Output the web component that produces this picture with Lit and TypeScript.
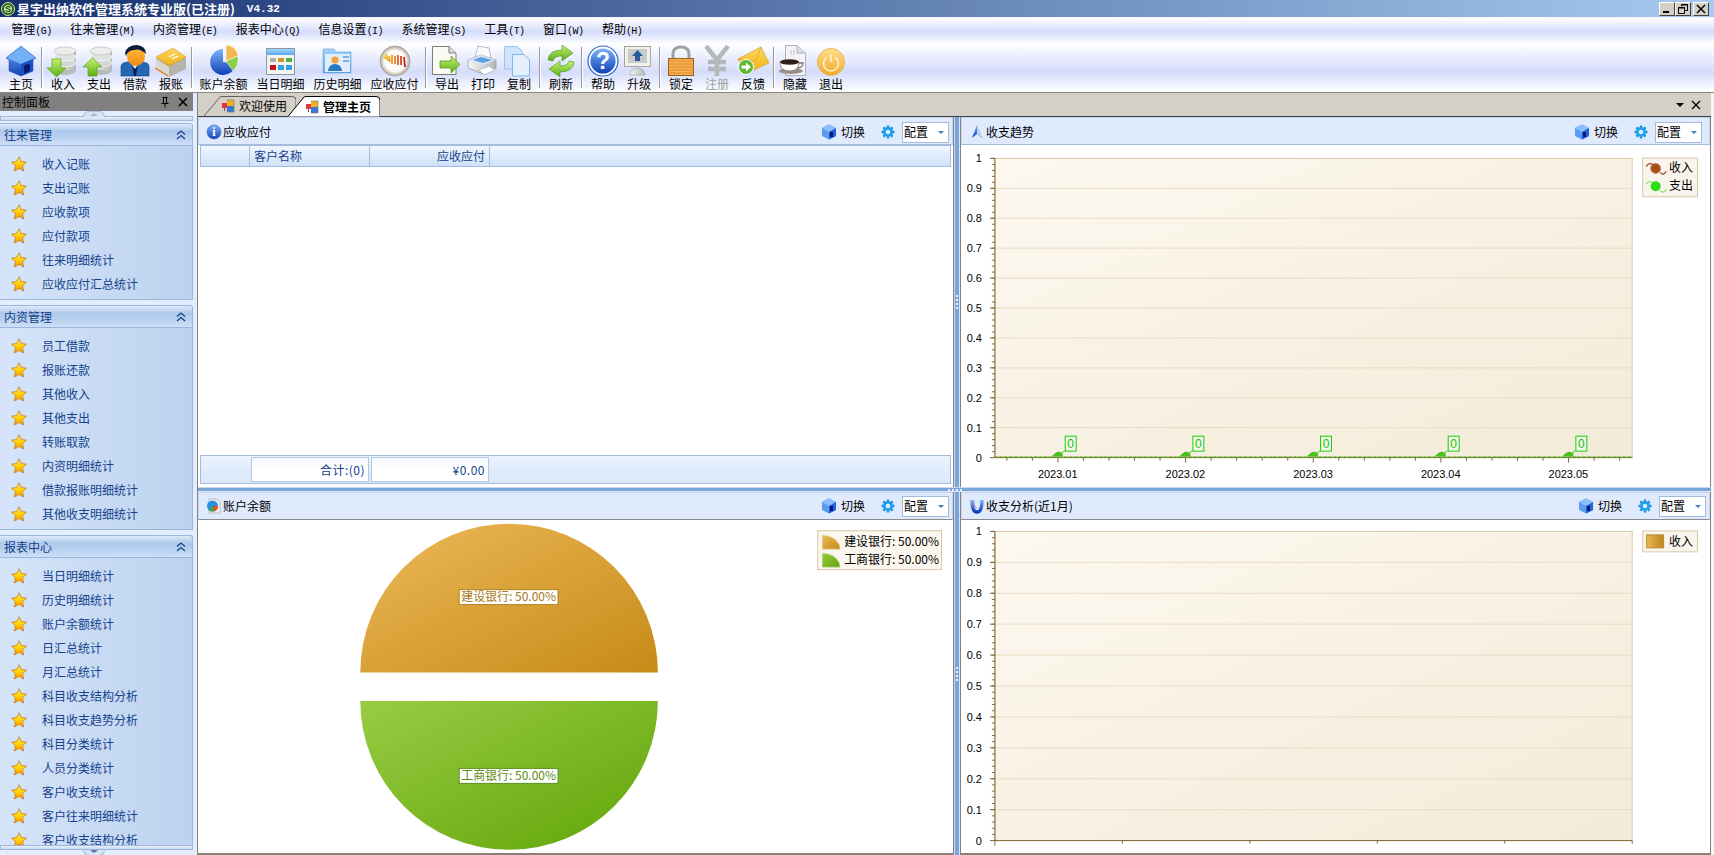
import { LitElement, html, svg, css } from "lit";
import { customElement } from "lit/decorators.js";

/* toolbar icons, drawn on a 32x32 box */

const cylinder = svg`
  <ellipse cx="18" cy="25" rx="11" ry="5" fill="#b8bcb8"/>
  <rect x="7" y="6" width="22" height="19" fill="url(#grey)"/>
  <ellipse cx="18" cy="18" rx="11" ry="4" fill="#d4d8d4" stroke="#fff" stroke-width=".6"/>
  <ellipse cx="18" cy="12" rx="11" ry="4" fill="#dfe2df" stroke="#fff" stroke-width=".6"/>
  <ellipse cx="18" cy="6" rx="11" ry="4" fill="#eceeec" stroke="#b0b4b0" stroke-width=".6"/>
`;

const icons: Record<string, unknown> = {
  home: svg`
    <path d="M16 1 L31 13 L28 15 V26 L16 31 L4 26 V15 L1 13 Z" fill="url(#blue)" stroke="#1c50b0" stroke-width=".5"/>
    <path d="M16 2 L30 13 L16 19 L2 13 Z" fill="#74b0f6"/>
    <path d="M16 19 L28 14 V26 L16 31 Z" fill="#1850c8"/>
    <path d="M19 29 V21 Q22 18 25 19.500 V26 Z" fill="#08186c"/>`,
  in: svg`${cylinder}
    <path d="M5 14 H14 V23 H19 L9.500 32 L0 23 H5 Z" fill="url(#green)" stroke="#58a010" stroke-width=".7"/>`,
  out: svg`${cylinder}
    <path d="M5 31 H14 V22 H19 L9.500 13 L0 22 H5 Z" fill="url(#green)" stroke="#58a010" stroke-width=".7"/>`,
  person: svg`
    <path d="M2 31 V21 Q2 18 8 17 H24 Q30 18 30 21 V31 Z" fill="#2468b4" stroke="#103c78" stroke-width=".6"/>
    <path d="M13 19 H19 L17 31 H15 Z" fill="#081c50"/>
    <path d="M11 17 L16 24 L21 17 Z" fill="#e8f0f8"/>
    <ellipse cx="17" cy="11" rx="9" ry="10" fill="url(#skin)"/>
    <path d="M6 8 Q8 0 18 0 Q27 1 27 9 Q21 3 15 5 Q9 5 7 11 Z" fill="#0c1c3c"/>`,
  book: svg`
    <path d="M1 14 L18 5 L31 13 V24 L14 32 L1 24 Z" fill="#b4b4ac"/>
    <path d="M1 14 L14 22 V32 L1 24 Z" fill="#d8d8d0"/>
    <path d="M1 12 L18 3 L31 12 L14 21 Z" fill="url(#gold)" stroke="#d09010" stroke-width=".5"/>
    <path d="M14 12 L20 9 M17 14 L23 11" stroke="#fff" stroke-width="1.300"/>
    <path d="M0 23 L13 31" stroke="#e87818" stroke-width="1.400"/>`,
  pie: svg`
    <path d="M15 4 A13 13 0 1 0 28 19 L15 17 Z" fill="url(#blue)"/>
    <path d="M18 16 V0 Q29 1 30 11 Z" fill="#f4b850" stroke="#fff" stroke-width=".5"/>
    <path d="M18 16 L30 11 Q31 21 25 26 Z" fill="#8cd048" stroke="#fff" stroke-width=".5"/>`,
  calendar: svg`
    <rect x="1.500" y="3.500" width="28" height="26" fill="#f4f4f0" stroke="#8c98a4"/>
    <rect x="2" y="4" width="27" height="6" fill="url(#sky)"/>
    <rect x="5" y="13" width="6" height="4" fill="#b0b0a8"/><rect x="13" y="13" width="6" height="4" fill="#d89028"/><rect x="21" y="13" width="6" height="4" fill="#50b048"/>
    <rect x="5" y="20" width="6" height="5" fill="#c01818"/><rect x="13" y="20" width="6" height="5" fill="#38a0e8"/><rect x="21" y="20" width="6" height="5" fill="#38a0e8"/>`,
  folder: svg`
    <path d="M1 4 H12 L14 7 H29 V28 H1 Z" fill="url(#sky)" stroke="#68a0d8" stroke-width=".6"/>
    <rect x="3" y="9" width="25" height="18" fill="#e0eefc"/>
    <circle cx="13" cy="15" r="3.600" fill="#f4a040"/>
    <path d="M6 26 Q7 19 13 19 Q19 19 20 26 Z" fill="#2878c8"/>
    <path d="M21 12 H27 M21 16 H27" stroke="#58a0e0" stroke-width="1.500"/>`,
  gauge: svg`
    <circle cx="16" cy="16" r="15" fill="url(#disc)" stroke="#a09890" stroke-width=".7"/>
    <path d="M4 10 L7 14 M7 9 L9 16 M10 11 L11 17 M13 10 L13 19 M16 11 L16 19 M19 10 L19 20 M22 11 L22 20 M25 12 L26 22" stroke="url(#bars)" stroke-width="1.700"/>`,
  export: svg`
    <path d="M1.500 1.500 H18 L25 8 V29.500 H1.500 Z" fill="#fbfbf6" stroke="#7c7c78"/>
    <path d="M18 1.500 V8 H25" fill="#dcdcd4" stroke="#7c7c78"/>
    <path d="M9 16 H20 V11 L29 19.500 L20 28 V23 H9 Z" fill="url(#green)" stroke="#489010" stroke-width=".7"/>`,
  print: svg`
    <path d="M8 13 L11 1 L22 3 L24 13 Z" fill="#fbfbfb" stroke="#9ca0a8" stroke-width=".7"/>
    <path d="M1 15 L14 10 L29 15 V23 L16 29 L1 23 Z" fill="url(#grey)" stroke="#8a90a0" stroke-width=".7"/>
    <path d="M1 15 L14 10 L29 15 L16 20 Z" fill="#d8e4f4"/>
    <path d="M6 15 L14 12 L25 15 L16 18 Z" fill="#5aa0e0"/>
    <path d="M12 25 L22 21 L28 25 L17 30 Z" fill="#fff" stroke="#9ca0a8" stroke-width=".6"/>`,
  copy: svg`
    <path d="M1.500 1.500 H14 L19 6 V24 H1.500 Z" fill="#cfe4fc" stroke="#98c4f0"/>
    <path d="M9.500 9.500 H21 L26.500 15 V31 H9.500 Z" fill="#e4f0fe" stroke="#80b4ec"/>`,
  refresh: svg`
    <path d="M3 15 Q4 5 17 5 V0 L28 8 L17 16 V11 Q9 11 8 16 Z" fill="url(#green)" stroke="#308010" stroke-width=".5"/>
    <path d="M29 17 Q28 27 15 27 V32 L4 24 L15 16 V21 Q23 21 24 16 Z" fill="url(#green)" stroke="#308010" stroke-width=".5"/>`,
  help: svg`
    <circle cx="16" cy="16" r="15" fill="#fff" stroke="#2a68c8" stroke-width="1.200"/>
    <circle cx="16" cy="16" r="12.600" fill="url(#blue)"/>
    <text x="16" y="24" text-anchor="middle" class="glyph">?</text>`,
  upgrade: svg`
    <rect x="1.500" y="1.500" width="26" height="20" fill="#f0f0ec" stroke="#a8a8a0"/>
    <rect x="5" y="4" width="19" height="14" fill="#c8ccc8"/>
    <path d="M14.500 5 L20 11 H17 V16 H12 V11 H9 Z" fill="#2a5a98"/>
    <path d="M7 30 Q8 23 14.500 23 Q21 23 22 30 Z" fill="url(#grey)" stroke="#909090" stroke-width=".5"/>`,
  lock: svg`
    <path d="M8 14 V9 Q8 2 16 2 Q24 2 24 9 V14" fill="none" stroke="#a0a0a0" stroke-width="3"/>
    <rect x="3.500" y="13.500" width="25" height="17" fill="#f4b058" stroke="#9c6018"/>
    <path d="M4 16 H28 M4 19 H28 M4 22 H28 M4 25 H28 M4 28 H28" stroke="#e88a20" stroke-width="1.200"/>`,
  yen: svg`
    <path d="M5 1 L16 15 L27 1 M16 15 V31 M7 17 H25 M7 24 H25" fill="none" stroke="#b4b8b8" stroke-width="4.500"/>`,
  mail: svg`
    <path d="M1 14 L24 2 L32 18 L10 28 Z" fill="url(#gold)" stroke="#c89820" stroke-width=".6"/>
    <path d="M1 14 L19 16 L24 2" fill="none" stroke="#d8a828" stroke-width=".8"/>
    <circle cx="9" cy="22" r="7.500" fill="#60b830" stroke="#fff"/>
    <path d="M4.500 20.500 H9 V17.500 L14 22 L9 26.500 V23.500 H4.500 Z" fill="#fff"/>`,
  coffee: svg`
    <path d="M6.500 .500 H18 L26.500 8 V30.500 H6.500 Z" fill="#f4f4f8" stroke="#b0b0b8"/>
    <path d="M18 .500 V8 H26.500" fill="#dcdce4" stroke="#b0b0b8"/>
    <path d="M12 5 V10 M15 5 V10" stroke="#c0c0c8"/>
    <ellipse cx="12" cy="26" rx="12" ry="3" fill="#989088"/>
    <path d="M1 17 H20 Q20 26 11 26 Q1 26 1 17 Z" fill="#fff" stroke="#707070" stroke-width=".7"/>
    <ellipse cx="10.500" cy="17" rx="9.500" ry="2.800" fill="#302018"/>
    <path d="M20 18 H24 Q24 23 18 23" fill="none" stroke="#807870" stroke-width="1.300"/>`,
  exit: svg`
    <circle cx="16" cy="17" r="13.500" fill="url(#orange)" stroke="#e8b850"/>
    <path d="M11.500 12.500 A7.500 7.500 0 1 0 20.500 12.500 M16 9.500 V17" fill="none" stroke="#fff3d0" stroke-width="1.600"/>`,
};

const defs = svg`<defs>
  <linearGradient id="blue" x1="0" y1="0" x2="0" y2="1"><stop offset="0" stop-color="#7cb4f8"/><stop offset="1" stop-color="#1040b8"/></linearGradient>
  <linearGradient id="green" x1="0" y1="0" x2="0" y2="1"><stop offset="0" stop-color="#c8f070"/><stop offset="1" stop-color="#58b018"/></linearGradient>
  <linearGradient id="grey" x1="0" y1="0" x2="1" y2="0"><stop offset="0" stop-color="#f4f6f4"/><stop offset="1" stop-color="#b4b8b4"/></linearGradient>
  <linearGradient id="skin" x1="0" y1="0" x2="0" y2="1"><stop offset="0" stop-color="#ffc040"/><stop offset="1" stop-color="#f08810"/></linearGradient>
  <linearGradient id="gold" x1="0" y1="0" x2="0" y2="1"><stop offset="0" stop-color="#ffd860"/><stop offset="1" stop-color="#f0b018"/></linearGradient>
  <linearGradient id="sky" x1="0" y1="0" x2="0" y2="1"><stop offset="0" stop-color="#a0d4fc"/><stop offset="1" stop-color="#58a8f0"/></linearGradient>
  <linearGradient id="orange" x1="0" y1="0" x2="0" y2="1"><stop offset="0" stop-color="#fde090"/><stop offset="1" stop-color="#f4a828"/></linearGradient>
  <radialGradient id="disc"><stop offset=".7" stop-color="#fbfbf8"/><stop offset="1" stop-color="#b0a89c"/></radialGradient>
  <linearGradient id="bars" x1="0" y1="0" x2="1" y2="0"><stop offset="0" stop-color="#f0d020"/><stop offset=".5" stop-color="#f08020"/><stop offset="1" stop-color="#c01818"/></linearGradient>
  <linearGradient id="star" x1="0" y1="0" x2="0" y2="1"><stop offset="0" stop-color="#fff650"/><stop offset=".55" stop-color="#ffd000"/><stop offset="1" stop-color="#fc9000"/></linearGradient>
  <linearGradient id="plot" x1="0" y1="0" x2="1" y2="1"><stop offset="0" stop-color="#fdf8f0"/><stop offset="1" stop-color="#f3ebd8"/></linearGradient>
  <linearGradient id="pieTop" x1="0" y1="0" x2="1" y2="1"><stop offset="0" stop-color="#ecba58"/><stop offset="1" stop-color="#c68a18"/></linearGradient>
  <linearGradient id="pieBot" x1="0" y1="0" x2="1" y2="1"><stop offset="0" stop-color="#98cc44"/><stop offset="1" stop-color="#60a408"/></linearGradient>
  <linearGradient id="swatch" x1="0" y1="0" x2="1" y2="0"><stop offset="0" stop-color="#eab850"/><stop offset="1" stop-color="#bc8420"/></linearGradient>
</defs>`;

type Tool = { label: string; icon: string; wide?: boolean; off?: boolean };

const toolGroups: Tool[][] = [
  [{ label: "主页", icon: "home" }],
  [
    { label: "收入", icon: "in" },
    { label: "支出", icon: "out" },
    { label: "借款", icon: "person" },
    { label: "报账", icon: "book" },
  ],
  [
    { label: "账户余额", icon: "pie", wide: true },
    { label: "当日明细", icon: "calendar", wide: true },
    { label: "历史明细", icon: "folder", wide: true },
    { label: "应收应付", icon: "gauge", wide: true },
  ],
  [
    { label: "导出", icon: "export" },
    { label: "打印", icon: "print" },
    { label: "复制", icon: "copy" },
  ],
  [{ label: "刷新", icon: "refresh" }],
  [
    { label: "帮助", icon: "help" },
    { label: "升级", icon: "upgrade" },
  ],
  [
    { label: "锁定", icon: "lock" },
    { label: "注册", icon: "yen", off: true },
    { label: "反馈", icon: "mail" },
  ],
  [
    { label: "隐藏", icon: "coffee" },
    { label: "退出", icon: "exit" },
  ],
];

const menus: [string, string][] = [
  ["管理", "G"],
  ["往来管理", "M"],
  ["内资管理", "E"],
  ["报表中心", "Q"],
  ["信息设置", "I"],
  ["系统管理", "S"],
  ["工具", "T"],
  ["窗口", "W"],
  ["帮助", "H"],
];

const navGroups: { title: string; items: string[] }[] = [
  { title: "往来管理", items: ["收入记账", "支出记账", "应收款项", "应付款项", "往来明细统计", "应收应付汇总统计"] },
  { title: "内资管理", items: ["员工借款", "报账还款", "其他收入", "其他支出", "转账取款", "内资明细统计", "借款报账明细统计", "其他收支明细统计"] },
  {
    title: "报表中心",
    items: ["当日明细统计", "历史明细统计", "账户余额统计", "日汇总统计", "月汇总统计", "科目收支结构分析", "科目收支趋势分析", "科目分类统计", "人员分类统计", "客户收支统计", "客户往来明细统计", "客户收支结构分析"],
  },
];

const star = svg`<svg class="star" viewBox="0 0 16 16"><path d="M8 .8 L10.200 5.600 L15.400 6.200 L11.500 9.700 L12.600 15 L8 12.300 L3.400 15 L4.500 9.700 L.6 6.200 L5.800 5.600 Z" fill="url(#star)" stroke="#c87820" stroke-width=".8"/></svg>`;

const flag = svg`<svg class="flag" viewBox="0 0 14 14">
  <rect x="6" y="1" width="7" height="6" fill="#f0b020"/><rect x="6" y="7" width="7" height="6" fill="#3878d8"/>
  <path d="M6 1 H13 V13 H6" fill="none" stroke="#707070" stroke-width=".6"/>
  <rect x="1" y="4" width="5" height="5" fill="#e03838"/><rect x="3" y="9" width="1" height="3" fill="#a04040"/></svg>`;

const titleIcons: Record<string, unknown> = {
  info: svg`<circle cx="8" cy="8" r="7" fill="url(#blue)" stroke="#4060a8" stroke-width=".6"/><text x="8" y="12" text-anchor="middle" class="dot">i</text>`,
  trend: svg`<path d="M8 1 L13 14 L8 10 L3 14 Z" fill="url(#blue)"/><path d="M8 1 L13 14 L8 10 Z" fill="#c0d4f0"/>`,
  account: svg`<path d="M3 1 H11 L14 4 V15 H3 Z" fill="#f0f0f4" stroke="#a0a0a8" stroke-width=".6"/><circle cx="6.500" cy="8" r="5.500" fill="#2890e0"/><path d="M6.500 8 L12 8 A5.500 5.500 0 0 1 8 13.300 Z" fill="#e84820"/><path d="M6.500 8 L8 13.300 A5.500 5.500 0 0 1 3 12.300 Z" fill="#40a830"/>`,
  analysis: svg`<path d="M3 2 Q3 14 8 14 Q13 14 13 2" fill="none" stroke="url(#blue)" stroke-width="3.400"/><path d="M5 3 Q5 10 8 10" fill="none" stroke="#b090d8" stroke-width="1.200"/>`,
};

const cube = svg`<svg class="cube" viewBox="0 0 16 16"><path d="M8 .5 Q10 1 15 4 V12 L8 15.500 L1 12 V4 Q6 1 8 .5 Z" fill="#5a9cf0"/><path d="M8 .5 Q10 1 15 4 L8 8 L1 4 Q6 1 8 .5 Z" fill="#8cc0fa"/><path d="M8 8 L15 4 V12 L8 15.500 Z" fill="#2460dc"/><rect x="9" y="8" width="3" height="5" fill="#081870"/></svg>`;

const gear = svg`<svg class="gear" viewBox="0 0 14 14"><path d="M7 .5 V2.500 M7 11.500 V13.500 M.5 7 H2.500 M11.500 7 H13.500 M2.400 2.400 L3.800 3.800 M10.200 10.200 L11.600 11.600 M11.600 2.400 L10.200 3.800 M3.800 10.200 L2.400 11.600" stroke="#1890e0" stroke-width="2.400"/><circle cx="7" cy="7" r="3.700" fill="#d8f0fc" stroke="#20a0ec" stroke-width="2.800"/></svg>`;

/* the two charts use page coordinates, so they read like the picture */

const PLOT_L = 994;
const PLOT_R = 1633;

function axes(top: number, bottom: number, labels: boolean) {
  const step = (bottom - top) / 10;
  const rows = Array.from({ length: 11 }, (_, i) => i);
  const yMinor = Array.from({ length: 50 }, (_, i) => top + (i * step) / 5);
  const xTicks = Array.from({ length: 25 }, (_, i) => PLOT_L + 12 + i * 25.6).filter((x) => x < PLOT_R);
  const months = ["2023.01", "2023.02", "2023.03", "2023.04", "2023.05"];
  const plainTicks = [1, 2, 3, 4, 5].map((i) => PLOT_L + i * 127.8);
  return svg`
    <rect x=${PLOT_L} y=${top} width=${PLOT_R - PLOT_L} height=${bottom - top} fill="url(#plot)" stroke="#d8c8a8"/>
    ${rows.map((i) => svg`
      ${i > 0 && i < 10 ? svg`<line x1=${PLOT_L} x2=${PLOT_R} y1=${top + i * step} y2=${top + i * step} stroke="#e8dcc4"/>` : ""}
      <line x1=${PLOT_L - 5} x2=${PLOT_L} y1=${top + i * step} y2=${top + i * step} stroke="#806838"/>
      <text x=${PLOT_L - 13} y=${top + i * step + 4} text-anchor="end" class="axis">${i === 0 ? "1" : i === 10 ? "0" : ((10 - i) / 10).toFixed(1)}</text>`)}
    ${yMinor.map((y) => svg`<line x1=${PLOT_L - 3} x2=${PLOT_L} y1=${y} y2=${y} stroke="#806838"/>`)}
    <line x1=${PLOT_L} x2=${PLOT_L} y1=${top} y2=${labels ? bottom : bottom + 5} stroke="#806838"/>
    <line x1=${PLOT_L} x2=${PLOT_R} y1=${bottom} y2=${bottom} stroke="#806838"/>
    ${labels
      ? xTicks.map((x, i) => svg`<line x1=${x} x2=${x} y1=${bottom} y2=${bottom + (i % 5 === 2 ? 5 : 3)} stroke="#806838"/>`)
      : plainTicks.map((x) => svg`<line x1=${x} x2=${x} y1=${bottom} y2=${bottom + 3} stroke="#806838"/>`)}
    ${labels ? months.map((m, i) => svg`<text x=${1057 + i * 128} y="477" text-anchor="middle" class="axis">${m}</text>`) : ""}
  `;
}

function trendChart() {
  const points = [1057, 1185, 1313, 1441, 1569];
  return svg`<svg class="chart" viewBox="960 145 751 340">
    ${axes(157, 457, true)}
    <line x1=${PLOT_L} x2=${PLOT_R} y1="456.500" y2="456.500" stroke="#30c818"/>
    <line x1=${PLOT_L} x2=${PLOT_R} y1="456.500" y2="456.500" stroke="#c85848" stroke-dasharray="2 3"/>
    ${points.map((x) => svg`
      <path d=${`M${x - 6} 456 Q${x} 448 ${x + 5} 453 L${x + 5} 456 Z`} fill="#48c020"/>
      <line x1=${x + 3} y1="453" x2=${x + 7} y2="450" stroke="#48c020"/>
      <rect x=${x + 7.5} y="435.500" width="11" height="15" fill="#f8f8e8" stroke="#10d010"/>
      <text x=${x + 13} y="447" text-anchor="middle" class="count">0</text>`)}
    <rect x="1643.500" y="156.500" width="55" height="39" fill="#faf5ec" stroke="#d8c8a8"/>
    <path d="M1647 165 Q1650 160 1655 164 M1661 171 Q1664 175 1667 170" fill="none" stroke="#a04030" stroke-width="1.200"/>
    <circle cx="1656.500" cy="167" r="5" fill="#a85018" stroke="#c88050" stroke-width=".6"/>
    <text x="1670" y="171" class="label">收入</text>
    <path d="M1647 183 Q1650 178 1655 182 M1661 189 Q1664 193 1667 188" fill="none" stroke="#80e870" stroke-width="1.200"/>
    <circle cx="1656.500" cy="185" r="5" fill="#28e010"/>
    <text x="1670" y="189" class="label">支出</text>
  </svg>`;
}

function analysisChart() {
  return svg`<svg class="chart" viewBox="960 520 751 333">
    ${axes(531, 841, false)}
    <rect x="1643.500" y="530.500" width="55" height="21" fill="#faf5ec" stroke="#d8c8a8"/>
    <rect x="1647.500" y="534.500" width="17" height="13" fill="url(#swatch)" stroke="#b88a30"/>
    <text x="1670" y="546" class="label">收入</text>
  </svg>`;
}

function pieChart() {
  return svg`<svg class="chart" viewBox="198 520 756 333">
    <path d="M360.500 672.500 A149 149 0 0 1 658.500 672.500 Z" fill="url(#pieTop)"/>
    <path d="M360.500 701 A149 149 0 0 0 658.500 701 Z" fill="url(#pieBot)"/>
    <rect x="459.500" y="589.500" width="99" height="15" fill="#fff" stroke="#b08020"/>
    <text x="509" y="601" text-anchor="middle" class="tip tip-a">建设银行: 50.00%</text>
    <rect x="459.500" y="768.500" width="99" height="15" fill="#fff" stroke="#5c9020"/>
    <text x="509" y="780" text-anchor="middle" class="tip tip-b">工商银行: 50.00%</text>
    <rect x="818.500" y="530.500" width="124" height="39" fill="#fbf7ef" stroke="#d8c8a8"/>
    <path d="M823 549 V535 A18 14 0 0 1 841 549 Z" fill="url(#pieTop)" stroke="#e8d8b0" stroke-width=".6"/>
    <text x="845" y="546" class="label">建设银行: 50.00%</text>
    <path d="M823 567 V553 A18 14 0 0 1 841 567 Z" fill="url(#pieBot)" stroke="#d0e0b0" stroke-width=".6"/>
    <text x="845" y="564" class="label">工商银行: 50.00%</text>
  </svg>`;
}

@customElement("app-root")
export class AppRoot extends LitElement {
  static styles = css`
    :host {
      display: block;
      width: 1714px;
      height: 855px;
      overflow: hidden;
      background: #f4f6fc;
      font-family: "Noto Sans CJK SC", "Liberation Sans", sans-serif;
      font-size: 12px;
      line-height: 14px;
      color: #000;
    }

    .defs {
      position: absolute;
      width: 0;
      height: 0;
    }

    /* title bar */
    .title {
      height: 17px;
      display: flex;
      align-items: center;
      background: linear-gradient(90deg, #16306f, #a6caf0);
      color: #fff;
      font-size: 13px;
      font-weight: 700;
      padding: 0 1px 0 1px;
      margin-bottom: 1px;
    }
    .logo {
      width: 14px;
      height: 14px;
      margin-right: 2px;
    }
    .version {
      font-family: "Liberation Mono", monospace;
      font-size: 11px;
      margin-left: 12px;
    }
    .win {
      margin-left: auto;
      display: flex;
      margin-right: 4px;
    }
    .win span {
      width: 16px;
      height: 14px;
      box-sizing: border-box;
      background: #d4d0c8;
      border: 1px solid;
      border-color: #fff #404040 #404040 #fff;
      display: flex;
      align-items: center;
      justify-content: center;
    }
    .win span:last-child {
      margin-left: 2px;
    }
    .win svg {
      width: 10px;
      height: 10px;
    }

    /* menu and toolbar share one banded background */
    .bars {
      height: 75px;
      box-sizing: border-box;
      border-bottom: 1px solid #8a8680;
      background: linear-gradient(180deg, #fff 0%, #d4dcfb 19%, #fff 35%, #d4dcfb 73%, #fff 100%);
    }
    .menu {
      height: 22px;
      display: flex;
      align-items: center;
      padding: 2px 0 0 2px;
      box-sizing: border-box;
    }
    .menu-item {
      padding: 0 9.3px;
      white-space: nowrap;
    }
    .menu-key {
      font-family: "Liberation Mono", monospace;
      font-size: 10px;
      letter-spacing: -0.6px;
    }
    .tools {
      display: flex;
      height: 47px;
      padding: 5px 0 0 3px;
      box-sizing: border-box;
    }
    .tool {
      width: 36px;
      height: 46px;
      display: flex;
      flex-direction: column;
      align-items: center;
      flex: none;
    }
    .tool.wide {
      width: 57px;
    }
    .tool svg {
      width: 32px;
      height: 32px;
      flex: none;
    }
    .tool span {
      white-space: nowrap;
    }
    .tool.off span {
      color: #a0a0a0;
    }
    .glyph {
      font: 700 23px "Liberation Sans", sans-serif;
      fill: #fff;
    }
    .dot {
      font: 700 12px "Liberation Serif", serif;
      fill: #fff;
    }
    .sep {
      width: 2px;
      height: 41px;
      margin: 2px 2px 0 2px;
      background: #9a9a9a;
      border-right: 1px solid #fff;
      box-sizing: border-box;
      flex: none;
    }

    .body {
      display: flex;
      height: 763px;
    }

    /* left navigation */
    .side {
      width: 197px;
      height: 763px;
      flex: none;
      overflow: hidden;
      box-sizing: border-box;
      background: #e2edfd;
      display: flex;
      flex-direction: column;
    }
    .side-title {
      height: 18px;
      flex: none;
      width: 193px;
      background: #808080;
      display: flex;
      align-items: center;
      padding: 0 4px 0 2px;
      box-sizing: border-box;
    }
    .side-title svg {
      width: 12px;
      height: 12px;
      margin-left: 6px;
    }
    .side-title svg:first-of-type {
      margin-left: auto;
    }
    .scroll-up,
    .scroll-down {
      width: 193px;
      flex: none;
      position: relative;
      box-sizing: border-box;
    }
    .scroll-up {
      height: 12px;
    }
    .scroll-up::before,
    .scroll-down::before {
      content: "";
      position: absolute;
      left: 0;
      right: 0;
      height: 5px;
      background: linear-gradient(180deg, #e8f0fb, #c8d8ee);
      border: 1px solid #9fb8dc;
      box-sizing: border-box;
    }
    .scroll-up::before {
      top: 5px;
    }
    .scroll-down::before {
      top: 0;
    }
    .bump {
      position: absolute;
      left: 83px;
      width: 22px;
      height: 6px;
      background: #d8e4f4;
      border: 1px solid #a8bedc;
      box-sizing: border-box;
    }
    .scroll-up .bump {
      top: 0;
      border-bottom: 0;
      border-radius: 11px 11px 0 0;
    }
    .scroll-down .bump {
      top: 5px;
      border-top: 0;
      border-radius: 0 0 11px 11px;
    }
    .bump::after {
      content: "";
      position: absolute;
      left: 6px;
      border-left: 4px solid transparent;
      border-right: 4px solid transparent;
    }
    .scroll-up .bump::after {
      top: 1px;
      border-bottom: 3px solid #a8b8d0;
    }
    .scroll-down .bump::after {
      top: 0;
      border-top: 3px solid #5878a8;
    }
    .groups {
      flex: 1;
      min-height: 0;
      overflow: hidden;
      width: 193px;
    }
    .group {
      margin-bottom: 5px;
    }
    .group-head {
      height: 23px;
      box-sizing: border-box;
      border: 1px solid #9ab6dc;
      border-left: 0;
      border-radius: 0 3px 0 0;
      background: linear-gradient(180deg, #dfeafa 0%, #adc8ea 35%, #bcd2f0 70%, #cfe0f8 100%);
      color: #15428b;
      display: flex;
      align-items: center;
      padding: 0 6px 0 4px;
    }
    .group-head svg {
      margin-left: auto;
      width: 10px;
      height: 10px;
    }
    .group-body {
      padding: 6px 0 3px;
      background: linear-gradient(90deg, #d5e4f9, #bdd2ef);
      border-right: 1px solid #9ab6dc;
      border-bottom: 1px solid #9ab6dc;
      box-sizing: border-box;
    }
    .nav-item {
      height: 24px;
      display: flex;
      align-items: center;
      padding-left: 11px;
      color: #15428b;
    }
    .star {
      width: 16px;
      height: 16px;
      margin-right: 15px;
      flex: none;
    }
    .scroll-down {
      height: 11px;
    }

    /* right of the navigation */
    .main {
      width: 1514px;
      height: 763px;
      flex: none;
      box-sizing: border-box;
      border-left: 1px solid #8a8078;
      display: flex;
      flex-direction: column;
    }
    .tabs {
      height: 24px;
      flex: none;
      background: #d4d0c8;
      border-bottom: 1px solid #404040;
      box-sizing: border-box;
      display: flex;
      align-items: flex-end;
      padding-left: 6px;
    }
    .tab {
      width: 92px;
      height: 20px;
      position: relative;
      display: flex;
      align-items: center;
      padding-left: 17px;
      box-sizing: border-box;
    }
    .tab + .tab {
      margin-left: -8px;
    }
    .tab.active {
      font-weight: 700;
      height: 21px;
      margin-bottom: -1px;
    }
    .tab-shape {
      position: absolute;
      left: 0;
      top: 0;
      width: 100%;
      height: 100%;
    }
    .flag {
      width: 14px;
      height: 14px;
      margin-right: 4px;
      position: relative;
    }
    .tab span {
      position: relative;
    }
    .tabs-end {
      margin-left: auto;
      align-self: center;
      display: flex;
      align-items: center;
      gap: 6px;
      margin-right: 10px;
    }
    .tabs-end svg {
      width: 10px;
      height: 10px;
    }

    .grid {
      flex: 1;
      min-height: 0;
      display: grid;
      grid-template-columns: 756px 6px 751px;
      grid-template-rows: 370px 5px 363px;
      background: #7ba4da;
    }
    .pane {
      background: #fff;
      display: flex;
      flex-direction: column;
      min-height: 0;
      overflow: hidden;
      position: relative;
    }
    .pane.low {
      border-bottom: 2px solid #8a8078;
    }
    .pane.low .pane-head {
      border-bottom-color: #8a8a90;
    }
    .pane.top .pane-head {
      padding-top: 2px;
    }
    .pane.edge {
      border-left: 1px solid #8a8078;
      border-right: 1px solid #8a8078;
    }
    .pane.near {
      border-right: 1px solid #8a8078;
    }
    .hsplit {
      grid-column: 1 / 4;
      background: #7ba4da;
      border-top: 1px solid #c8d8ee;
      border-bottom: 1px solid #d8e6f8;
      display: flex;
      align-items: center;
      justify-content: center;
      gap: 2px;
      box-sizing: border-box;
    }
    .hsplit i {
      width: 2px;
      height: 2px;
      background: #e8f0fc;
    }
    .vsplit {
      background: #7ba4da;
      border-left: 1px solid #c8d8ee;
      border-right: 1px solid #d8e6f8;
      display: flex;
      flex-direction: column;
      align-items: center;
      justify-content: center;
      gap: 2px;
    }
    .vsplit i {
      width: 2px;
      height: 2px;
      background: #e8f0fc;
    }
    .pane-head {
      height: 28px;
      flex: none;
      box-sizing: border-box;
      background: #dfeafc;
      border: 1px solid #c4d8f4;
      border-bottom: 1px solid #a4bcdc;
      display: flex;
      align-items: center;
      padding: 0 3px 0 7px;
    }
    .pane-head.inset {
      padding-right: 7px;
    }
    .pane-icon {
      width: 16px;
      height: 16px;
      margin-right: 1px;
    }
    .actions {
      margin-left: auto;
      display: flex;
      align-items: center;
    }
    .cube {
      width: 16px;
      height: 16px;
      margin-right: 4px;
    }
    .gear {
      width: 14px;
      height: 14px;
      margin: 0 7px 0 16px;
    }
    .pick {
      width: 47px;
      height: 21px;
      box-sizing: border-box;
      background: #fff;
      border: 1px solid #a4bcdc;
      display: flex;
      align-items: center;
      padding-left: 1px;
      position: relative;
    }
    .pick::after {
      content: "";
      position: absolute;
      right: 4px;
      top: 8px;
      border-left: 3px solid transparent;
      border-right: 3px solid transparent;
      border-top: 3px solid #4878c0;
    }

    /* table */
    .table-head {
      margin: 0 2px;
      height: 22px;
      flex: none;
      display: flex;
      box-sizing: border-box;
      border: 1px solid #a4bcdc;
      background: linear-gradient(180deg, #eff6fe, #cfe1f9);
      color: #15428b;
    }
    .table-head span {
      box-sizing: border-box;
      border-right: 1px solid #a4bcdc;
      display: flex;
      align-items: center;
      width: 120px;
      padding: 0 4px;
    }
    .table-head span:first-child {
      width: 49px;
    }
    .table-head span:nth-child(3) {
      justify-content: flex-end;
    }
    .table-body {
      flex: 1;
    }
    .table-foot {
      margin: 0 2px 3px;
      height: 29px;
      flex: none;
      box-sizing: border-box;
      border: 1px solid #a4bcdc;
      background: linear-gradient(180deg, #eaf3fe, #d8e7fb);
      display: flex;
      align-items: center;
      padding-left: 50px;
      gap: 2px;
      color: #15428b;
    }
    .table-foot span {
      height: 25px;
      width: 118px;
      box-sizing: border-box;
      border: 1px solid #b4c8e4;
      background: linear-gradient(180deg, #f4f7fc, #fff 50%);
      display: flex;
      align-items: center;
      justify-content: flex-end;
      padding-right: 3px;
      letter-spacing: 0.5px;
    }

    /* svg chart texts */
    .chart {
      display: block;
      flex: 1;
      min-height: 0;
      width: 100%;
    }
    .axis {
      font: 11px "Liberation Sans", sans-serif;
      fill: #000;
    }
    .count {
      font: 12px "Liberation Sans", sans-serif;
      fill: #10c010;
    }
    .label {
      font: 12px "Noto Sans CJK SC", "Liberation Sans", sans-serif;
      fill: #000;
    }
    .tip {
      font: 12px "Noto Sans CJK SC", "Liberation Sans", sans-serif;
    }
    .tip-a {
      fill: #a87818;
    }
    .tip-b {
      fill: #5c8c10;
    }
  `;

  private actions() {
    return html`<div class="actions">${cube}<span>切换</span>${gear}<div class="pick">配置</div></div>`;
  }

  private head(title: string, icon: string, inset = false) {
    return html`<div class="pane-head ${inset ? "inset" : ""}">
      <svg class="pane-icon" viewBox="0 0 16 16">${titleIcons[icon]}</svg>
      <span>${title}</span>
      ${this.actions()}
    </div>`;
  }

  render() {
    const chevrons = svg`<svg viewBox="0 0 10 10"><path d="M1 4.500 L5 1 L9 4.500 M1 9 L5 5.500 L9 9" fill="none" stroke="#15428b" stroke-width="1.300"/></svg>`;
    const cross = svg`<svg viewBox="0 0 12 12"><path d="M2 2 L10 10 M10 2 L2 10" stroke="#000" stroke-width="1.600"/></svg>`;
    const dots = [0, 1, 2, 3].map(() => html`<i></i>`);
    return html`
      <svg class="defs">${defs}</svg>
      <div class="title">
        <svg class="logo" viewBox="0 0 14 14"><circle cx="7" cy="7" r="6.500" fill="#1a6a30" stroke="#e8e080"/><circle cx="7" cy="7" r="4" fill="#d8e8a0"/><text x="7" y="10" text-anchor="middle" font-size="9" font-weight="700" fill="#103818" font-family="Liberation Sans">S</text></svg>
        <span>星宇出纳软件管理系统专业版(已注册)</span><span class="version">V4.32</span>
        <div class="win">
          <span><svg viewBox="0 0 10 10"><rect x="1" y="7" width="6" height="2" fill="#000"/></svg></span>
          <span><svg viewBox="0 0 10 10"><path d="M3.500 2.500 V.5 H9.500 V6.500 H7 M.5 3.500 H6.500 V9.500 H.5 Z" fill="none" stroke="#000"/><path d="M3 1 H10 M0 4 H7" stroke="#000"/></svg></span>
          <span><svg viewBox="0 0 10 10"><path d="M1 1 L9 9 M9 1 L1 9" stroke="#000" stroke-width="1.500"/></svg></span>
        </div>
      </div>

      <div class="bars">
        <div class="menu">
          ${menus.map(([label, key]) => html`<div class="menu-item">${label}<span class="menu-key">(${key})</span></div>`)}
        </div>
        <div class="tools">
          ${toolGroups.map(
            (group, i) => html`
              ${i > 0 ? html`<div class="sep"></div>` : ""}
              ${group.map(
                (t) => html`<div class="tool ${t.wide ? "wide" : ""} ${t.off ? "off" : ""}">
                  <svg viewBox="0 0 32 32">${icons[t.icon]}</svg>
                  <span>${t.label}</span>
                </div>`
              )}
            `
          )}
        </div>
      </div>

      <div class="body">
        <aside class="side">
          <div class="side-title">
            <span>控制面板</span>
            <svg viewBox="0 0 12 12"><path d="M3.500 1.500 H8.500 M4.500 1.500 V7 M7.500 1.500 V7 M2.500 7.500 H9.500 M6 7.500 V11.500" fill="none" stroke="#000"/></svg>
            ${cross}
          </div>
          <div class="scroll-up"><div class="bump"></div></div>
          <div class="groups">
            ${navGroups.map(
              (g) => html`<section class="group">
                <div class="group-head"><span>${g.title}</span>${chevrons}</div>
                <div class="group-body">
                  ${g.items.map((item) => html`<div class="nav-item">${star}<span>${item}</span></div>`)}
                </div>
              </section>`
            )}
          </div>
          <div class="scroll-down"><div class="bump"></div></div>
        </aside>

        <main class="main">
          <div class="tabs">
            <div class="tab">
              <svg class="tab-shape" viewBox="0 0 92 20" preserveAspectRatio="none"><path d="M0 20 L16 1 Q17 .5 18 .5 H88 Q92 .5 92 4 V20" fill="#d4d0c8" stroke="#606060"/></svg>
              ${flag}<span>欢迎使用</span>
            </div>
            <div class="tab active">
              <svg class="tab-shape" viewBox="0 0 92 21" preserveAspectRatio="none"><path d="M0 20.500 L16 1 Q17 .5 18 .5 H88 Q92 .5 92 4 V20.500" fill="#fff" stroke="#000"/></svg>
              ${flag}<span>管理主页</span>
            </div>
            <div class="tabs-end">
              <svg viewBox="0 0 10 10"><path d="M1 3 H9 L5 7 Z" fill="#000"/></svg>
              <svg viewBox="0 0 10 10"><path d="M1 1 L9 9 M9 1 L1 9" stroke="#000" stroke-width="1.300"/></svg>
            </div>
          </div>

          <div class="grid">
            <section class="pane top near">
              ${this.head("应收应付", "info")}
              <div class="table-head"><span></span><span>客户名称</span><span>应收应付</span></div>
              <div class="table-body"></div>
              <div class="table-foot"><span>合计:(0)</span><span>¥0.00</span></div>
            </section>
            <div class="vsplit">${dots}</div>
            <section class="pane top edge">
              ${this.head("收支趋势", "trend", true)}
              ${trendChart()}
            </section>

            <div class="hsplit">${dots}</div>

            <section class="pane low near">
              ${this.head("账户余额", "account")}
              ${pieChart()}
            </section>
            <div class="vsplit">${dots}</div>
            <section class="pane low edge">
              ${this.head("收支分析(近1月)", "analysis")}
              ${analysisChart()}
            </section>
          </div>
        </main>
      </div>
    `;
  }
}
